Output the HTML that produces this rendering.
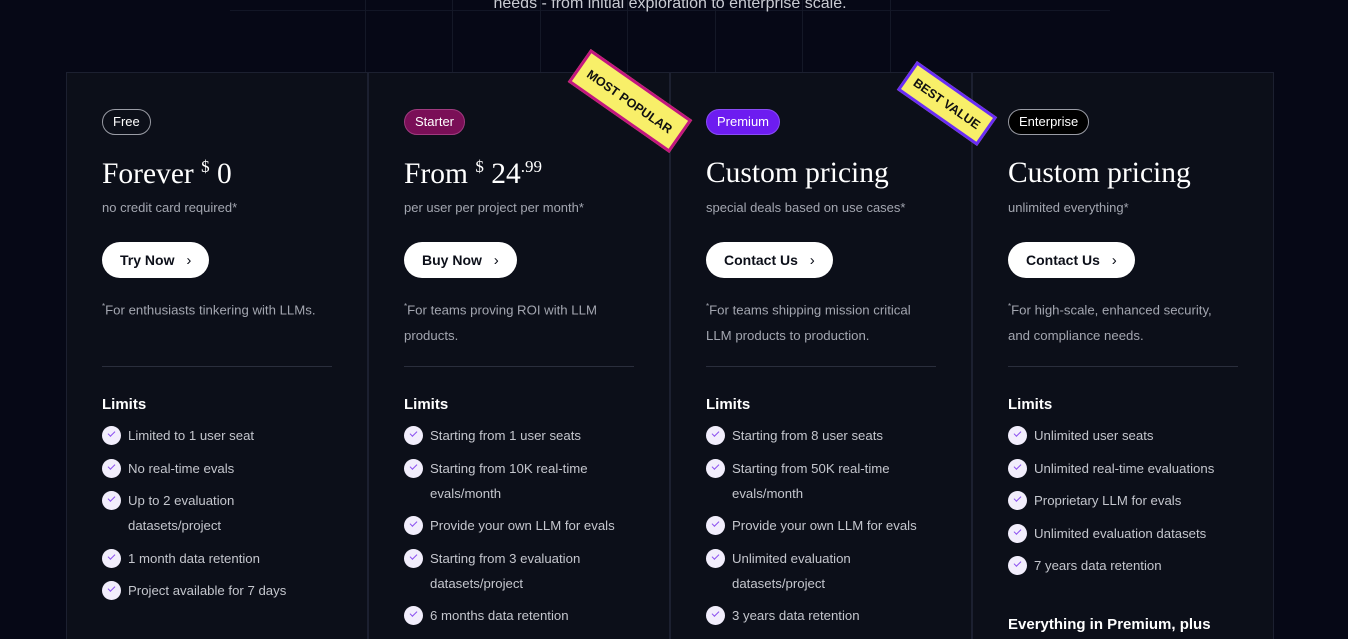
<!DOCTYPE html>
<html><head><meta charset="utf-8"><style>
*{margin:0;padding:0;box-sizing:border-box}
html,body{width:1348px;height:639px;overflow:hidden}
body{background:#060816;font-family:"Liberation Sans",sans-serif;position:relative;color:#fff}
.vl{position:absolute;top:0;height:72px;width:1px;background:#141827}
.hl{position:absolute;left:230px;width:880px;top:10px;height:1px;background:#121626}
.intro{position:absolute;top:-5px;left:0;width:1340px;text-align:center;font-size:16px;color:#c9cbd2}
.card{position:absolute;top:72px;height:567px;width:302px;background:#0c0f19;border:1px solid #1c2030;border-bottom:none}
.in{position:absolute;left:35px;top:0;width:230px}
.tag{position:absolute;top:36px;height:26px;border-radius:13px;font-size:13px;line-height:24px;padding:0 10px;color:#fff}
.title{position:absolute;top:84px;font-family:"Liberation Serif",serif;font-size:29.5px;white-space:nowrap}
.title sup{font-size:17px;vertical-align:11px}
.sub{position:absolute;top:127px;font-size:13px;color:#a3a6b0;white-space:nowrap}
.btn{position:absolute;top:169px;height:36px;background:#fff;color:#0c0f19;border-radius:18px;font-size:14px;font-weight:bold;line-height:36px;padding:0 18px;white-space:nowrap}
.btn span{font-weight:normal;margin-left:8px;font-size:15px}
.note{position:absolute;top:221px;font-size:13.2px;color:#a3a6b0;line-height:25.5px;width:232px}
.note sup{font-size:8px}
.div{position:absolute;top:293px;width:230px;height:1px;background:#2a2e3c}
.lim{position:absolute;top:323px;font-size:15px;font-weight:bold}
ul{position:absolute;top:350px;list-style:none;width:225px}
li{position:relative;padding-left:26px;font-size:13.2px;color:#c4c6cd;line-height:25px;margin-bottom:7.5px}
li:before{content:"";position:absolute;left:0;top:3px;width:19px;height:19px;border-radius:50%;background:#f2eefc}
li:after{content:"";position:absolute;left:6px;top:8px;width:6px;height:3px;border-left:1.5px solid #8b4ff0;border-bottom:1.5px solid #8b4ff0;transform:rotate(-45deg)}
.rib{position:absolute;background:#f8ef69;color:#111;font-weight:bold;font-size:12.5px;text-align:center;transform:rotate(35deg)}
.ev{position:absolute;top:543px;font-size:15px;font-weight:bold;white-space:nowrap}
</style></head><body>
<div class="hl"></div>
<div class="vl" style="left:365px"></div><div class="vl" style="left:452px"></div><div class="vl" style="left:540px"></div><div class="vl" style="left:627px"></div><div class="vl" style="left:715px"></div><div class="vl" style="left:802px"></div><div class="vl" style="left:890px"></div>
<div class="intro">needs - from initial exploration to enterprise scale.</div>

<div class="card" style="left:66px"><div class="in">
<div class="tag" style="border:1px solid #9a9ca5">Free</div>
<div class="title">Forever <sup>$</sup> 0</div>
<div class="sub">no credit card required*</div>
<div class="btn">Try Now <span>›</span></div>
<div class="note"><sup>*</sup>For enthusiasts tinkering with LLMs.</div>
<div class="div"></div><div class="lim">Limits</div>
<ul style="width:200px"><li>Limited to 1 user seat</li><li>No real-time evals</li><li>Up to 2 evaluation datasets/project</li><li>1 month data retention</li><li>Project available for 7 days</li></ul>
</div></div>

<div class="card" style="left:368px"><div class="in">
<div class="tag" style="background:#7a0f57;border:1px solid #a03a7f">Starter</div>
<div class="title">From <sup>$</sup> 24<sup style="font-size:17px">.99</sup></div>
<div class="sub">per user per project per month*</div>
<div class="btn">Buy Now <span>›</span></div>
<div class="note"><sup>*</sup>For teams proving ROI with LLM products.</div>
<div class="div"></div><div class="lim">Limits</div>
<ul><li>Starting from 1 user seats</li><li>Starting from 10K real-time evals/month</li><li>Provide your own LLM for evals</li><li>Starting from 3 evaluation datasets/project</li><li>6 months data retention</li></ul>
</div></div>

<div class="card" style="left:670px"><div class="in">
<div class="tag" style="background:#6d1cf0;border:1px solid #8a4cf5">Premium</div>
<div class="title">Custom pricing</div>
<div class="sub">special deals based on use cases*</div>
<div class="btn">Contact Us <span>›</span></div>
<div class="note"><sup>*</sup>For teams shipping mission critical LLM products to production.</div>
<div class="div"></div><div class="lim">Limits</div>
<ul><li>Starting from 8 user seats</li><li>Starting from 50K real-time evals/month</li><li>Provide your own LLM for evals</li><li>Unlimited evaluation datasets/project</li><li>3 years data retention</li></ul>
</div></div>

<div class="card" style="left:972px"><div class="in">
<div class="tag" style="background:#000;border:1px solid #9a9ca5">Enterprise</div>
<div class="title">Custom pricing</div>
<div class="sub">unlimited everything*</div>
<div class="btn">Contact Us <span>›</span></div>
<div class="note" style="width:222px"><sup>*</sup>For high-scale, enhanced security, and compliance needs.</div>
<div class="div"></div><div class="lim">Limits</div>
<ul style="width:250px"><li>Unlimited user seats</li><li>Unlimited real-time evaluations</li><li>Proprietary LLM for evals</li><li>Unlimited evaluation datasets</li><li>7 years data retention</li></ul>
<div class="ev">Everything in Premium, plus</div>
</div></div>

<div class="rib" style="left:568px;top:81px;width:124px;height:40px;line-height:36px;border:3px solid #c3167f">MOST POPULAR</div>
<div class="rib" style="left:898px;top:86px;width:98px;height:35px;line-height:31px;border:3px solid #6a2cf5">BEST VALUE</div>
</body></html>
